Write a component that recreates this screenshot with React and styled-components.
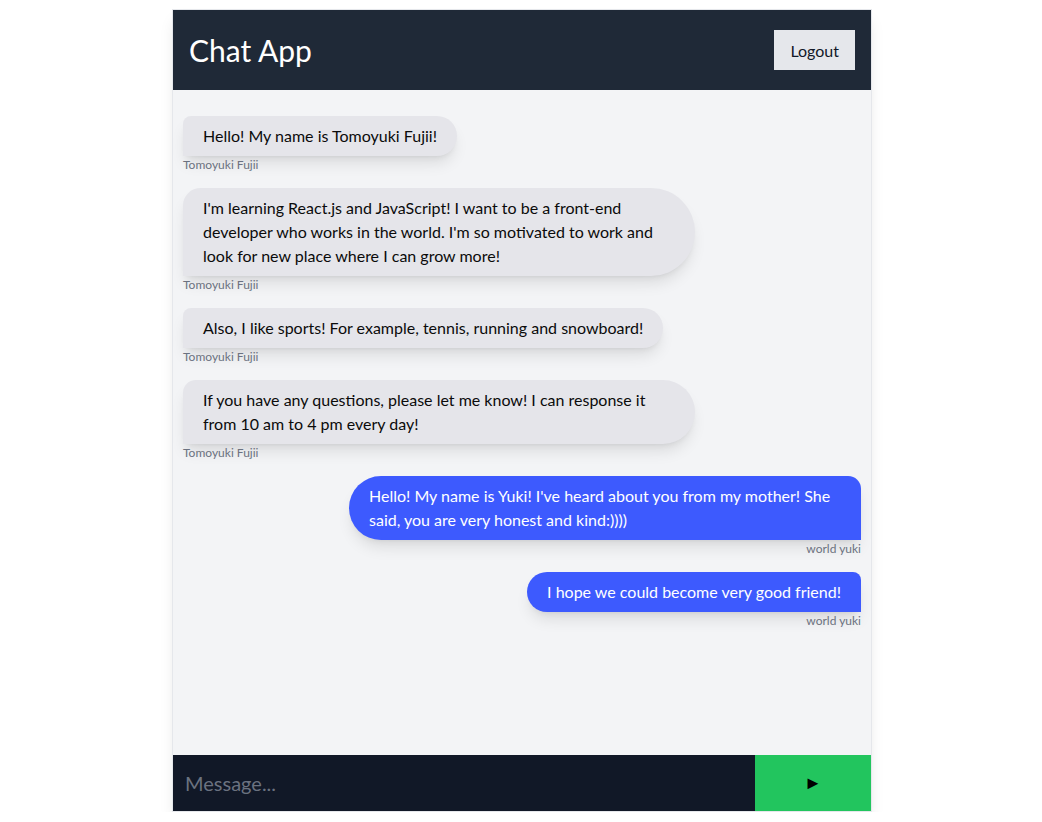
import React from 'react'
import styled, {createGlobalStyle} from 'styled-components'

const GlobalStyle = createGlobalStyle`
body {
  margin: 0 0 0 2px;
  background: #ffffff;
  font-family: Lato, "Noto Sans", sans-serif;
}
* {
  box-sizing: border-box;
}
`

const Wrapper = styled('div')`
width: 700px;
margin: 9px auto 0;
border: 1px solid #e5e7eb;
display: flex;
flex-direction: column;
box-shadow: 0 10px 15px -3px rgba(0, 0, 0, 0.1), 0 4px 6px -4px rgba(0, 0, 0, 0.1);
`

const Header = styled('header')`
height: 80px;
background: #1f2937;
display: flex;
align-items: center;
justify-content: space-between;
padding: 0 16px;
`

const Title = styled('h1')`
margin: 0;
color: white;
font-size: 30px;
font-weight: 400;
`

const LogoutButton = styled('button')`
height: 40px;
padding: 0 16px;
border: none;
background: #e5e7eb;
color: #111827;
font-family: inherit;
font-size: 16px;
cursor: pointer;
`

const Messages = styled('div')`
height: 665px;
background: #f3f4f6;
padding: 26px 10px 10px;
display: flex;
flex-direction: column;
gap: 16px;
overflow-y: auto;
`

const Group = styled('div')`
display: flex;
flex-direction: column;
align-items: ${props => props.mine ? 'flex-end' : 'flex-start'};
`

const Bubble = styled('div')`
max-width: 512px;
padding: 8px 20px;
font-size: 16px;
line-height: 24px;
background: ${props => props.mine ? '#3d5afe' : '#e5e5ea'};
color: ${props => props.mine ? '#ffffff' : '#0b0b0b'};
border-radius: ${props => props.mine ? '50px 20px 0 50px' : '20px 50px 50px 0'};
box-shadow: 0 10px 15px -3px rgba(0, 0, 0, 0.1), 0 4px 6px -4px rgba(0, 0, 0, 0.1);
`

const Name = styled('span')`
font-size: 12px;
line-height: 14px;
padding-top: 2px;
color: #6b7280;
`

const InputBar = styled('form')`
display: flex;
height: 56px;
margin: 0;
`

const MessageInput = styled('input')`
flex: 1;
border: none;
outline: none;
background: #111827;
color: white;
font-family: inherit;
font-size: 20px;
padding: 0 12px;
caret-color: white;
&::placeholder {
  color: #6b7280;
}
`

const SendButton = styled('button')`
width: 116px;
border: none;
background: #22c55e;
color: #000000;
font-size: 18px;
cursor: pointer;
`

const messages = [
    {id: 1, text: 'Hello! My name is Tomoyuki Fujii!', user: 'Tomoyuki Fujii', mine: false},
    {id: 2, text: "I'm learning React.js and JavaScript! I want to be a front-end developer who works in the world. I'm so motivated to work and look for new place where I can grow more!", user: 'Tomoyuki Fujii', mine: false},
    {id: 3, text: 'Also, I like sports! For example, tennis, running and snowboard!', user: 'Tomoyuki Fujii', mine: false},
    {id: 4, text: 'If you have any questions, please let me know! I can response it from 10 am to 4 pm every day!', user: 'Tomoyuki Fujii', mine: false},
    {id: 5, text: "Hello! My name is Yuki! I've heard about you from my mother! She said, you are very honest and kind:))))", user: 'world yuki', mine: true},
    {id: 6, text: 'I hope we could become very good friend!', user: 'world yuki', mine: true},
]

export default function App(){
    return(
        <>
            <GlobalStyle />
            <Wrapper>
                <Header>
                    <Title>Chat App</Title>
                    <LogoutButton>Logout</LogoutButton>
                </Header>
                <Messages>
                    {messages.map(m => (
                        <Group key={m.id} mine={m.mine}>
                            <Bubble mine={m.mine}>{m.text}</Bubble>
                            <Name>{m.user}</Name>
                        </Group>
                    ))}
                </Messages>
                <InputBar onSubmit={e => e.preventDefault()}>
                    <MessageInput placeholder="Message..." autoFocus />
                    <SendButton type="submit">►</SendButton>
                </InputBar>
            </Wrapper>
        </>
    )
}
